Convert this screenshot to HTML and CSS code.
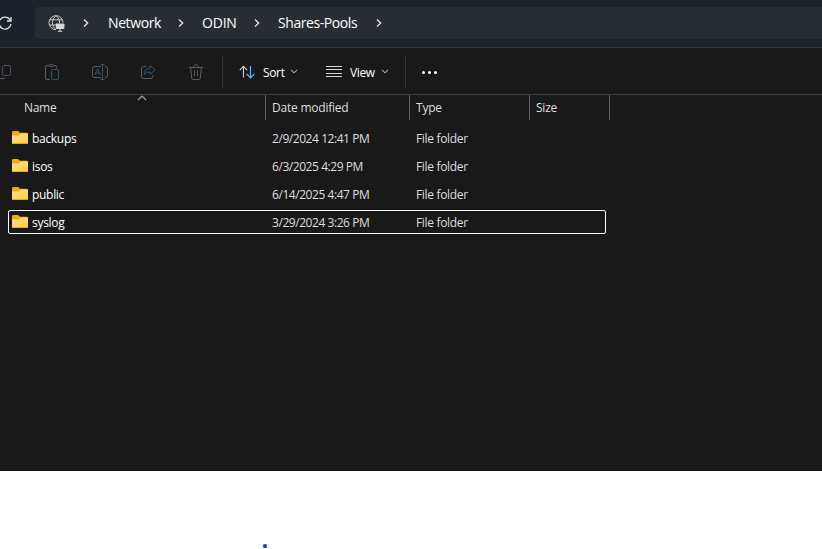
FILE: index.html
```html
<!DOCTYPE html>
<html lang="en">
<head>
<meta charset="utf-8">
<title>Shares-Pools</title>
<link rel="stylesheet" href="styles.css">
</head>
<body>
<svg class="defs" width="0" height="0" aria-hidden="true">
  <defs>
    <linearGradient id="fold" x1="0" y1="0" x2="1" y2="1"><stop offset="0" stop-color="#ffe59b"/><stop offset="1" stop-color="#ffc937"/></linearGradient>
    <symbol id="folder" viewBox="0 0 16 13">
      <path d="M0 1.4Q0 0 1.2 0H5.6Q6.3 0 6.8.6L8 1.7H14.8Q16 1.7 16 2.8V11H0Z" fill="#f5aa0b"/>
      <path d="M0 4.4H6.2Q7 4.4 7.6 3.8L8.8 2.5H15Q16 2.5 16 3.5V11.8Q16 13 14.8 13H1.2Q0 13 0 11.8Z" fill="url(#fold)"/>
      <path d="M.3 12.5H15.7" stroke="#e1a51d" stroke-width=".9"/>
    </symbol>
    <symbol id="chevron" viewBox="0 0 6 8"><path d="M1 .5 4.7 4 1 7.5" fill="none" stroke="#e6e7e8" stroke-width="1.3"/></symbol>
    <symbol id="caret" viewBox="0 0 8 5"><path d="M1 .8 4 3.8 7 .8" fill="none" stroke="#aaa" stroke-width="1.1"/></symbol>
  </defs>
</svg>
<main class="window">
  <header class="address">
    <svg class="refresh" width="16" height="16" viewBox="0 0 16 16" fill="none" stroke="#e2e4e5" stroke-width="1.3"><path d="M13.1 4.8A6 6 0 1 0 14 9M14 2V6H10"/></svg>
    <nav class="crumbs">
      <svg class="globe" width="17" height="17" viewBox="0 0 17 17" fill="none" stroke="#c8cacc">
        <path d="M15 7.5A7 7 0 1 0 8 14.7M8 .7C3.2 4.5 3.2 11 8 14.7M8 .7C10.5 2.8 11.6 5.2 11.6 8M1.8 4.8H14.2M1.2 10H8"/>
        <path d="M8.4 8.4H15.6Q16.4 8.4 16.4 9.2V13.2Q16.4 14 15.6 14H8.4Q7.8 14 7.8 13.2V9.2Q7.8 8.4 8.4 8.4Z" fill="#d4d6d8" stroke="none"/><path d="M12 14V16M10 16.3H14.2" stroke="#d4d6d8"/>
      </svg>
      <svg class="sep sep-1"><use href="#chevron"/></svg>
      <span class="crumb network">Network</span>
      <svg class="sep"><use href="#chevron"/></svg>
      <span class="crumb odin">ODIN</span>
      <svg class="sep"><use href="#chevron"/></svg>
      <span class="crumb shares">Shares-Pools</span>
      <svg class="sep"><use href="#chevron"/></svg>
    </nav>
  </header>
  <div class="toolbar">
    <div class="actions">
      <svg viewBox="0 0 16 16"><path class="gray" d="M3.5 3.5Q2.5 3.5 2.5 5.5V12.5Q2.5 14.5 4.5 14.5H7.5Q9 14.5 9.3 13.5"/><rect class="blue" x="6.5" y="1.5" width="8" height="10" rx="1.5"/></svg>
      <svg viewBox="0 0 16 16"><path class="gray" d="M6 15.5H3Q1.5 15.5 1.5 14V3Q1.5 1.5 3 1.5H4.5M9.5 1.5H11Q12.5 1.5 12.5 3V4"/><rect class="gray" x="4.5" y=".6" width="5" height="2" rx="1"/><rect class="blue" x="7.5" y="5.5" width="7" height="10" rx="1"/></svg>
      <svg viewBox="0 0 16 16"><path class="gray" d="M9 2.5H2.5Q.5 2.5 .5 4.5V11.5Q.5 13.5 2.5 13.5H9M13 2.5Q15.5 2.5 15.5 5V11Q15.5 13.5 13 13.5"/><path class="blue" d="M3 11 5.7 4.5 8.5 11M4 9H7.5M10.5 1V15M8.5 .5H12.5M8.5 15.5H12.5"/></svg>
      <svg viewBox="0 0 16 16"><path class="gray" d="M6 2.5H3.5Q1.5 2.5 1.5 4.5V12.5Q1.5 14.5 3.5 14.5H11Q13 14.5 13 12.5V11"/><path class="blue" d="M10 1.5 15 6 10 10.3V8Q6 7.6 4 10.8 4.2 4.8 10 4Z"/></svg>
      <svg viewBox="0 0 16 16"><path class="gray" d="M1 3.5H15M5.7 3V2.3Q5.7 .8 8 .8T10.3 2.3V3M2.6 3.5 3.7 14Q3.9 15.5 5.2 15.5H10.8Q12.1 15.5 12.3 14L13.4 3.5M6.5 6.5V12M9.5 6.5V12"/></svg>
    </div>
    <div class="sort">
      <svg width="17" height="14" viewBox="0 0 17 14" fill="none"><path d="M4.5 12.5V1.5M.8 5.2 4.5 1.3 8.2 5.2" stroke="#ccc" stroke-width="1.1"/><path d="M11.5 1V12.5M7.6 8.8 11.5 12.8 15.4 8.8" stroke="#4cc2ff" stroke-width="1.2"/></svg>
      <span class="label">Sort</span>
      <svg class="caret"><use href="#caret"/></svg>
    </div>
    <div class="view">
      <svg width="16" height="11" viewBox="0 0 16 11"><path d="M0 .5H16M0 3.5H16M0 7.5H16M0 10.5H16" stroke="#d4d4d4"/></svg>
      <span class="label">View</span>
      <svg class="caret"><use href="#caret"/></svg>
    </div>
    <div class="more"><i></i><i></i><i></i></div>
  </div>
  <section class="files">
    <div class="row head">
      <span class="name">Name<svg class="sorted" width="10" height="6" viewBox="0 0 10 6"><path d="M1 5 5 1 9 5" fill="none" stroke="#aaa" stroke-width="1.1"/></svg></span><span>Date modified</span><span>Type</span><span>Size</span>
    </div>
    <div class="row"><span class="name"><svg class="folder"><use href="#folder"/></svg>backups</span><span class="date">2/9/2024 12:41 PM</span><span>File folder</span></div>
    <div class="row"><span class="name"><svg class="folder"><use href="#folder"/></svg>isos</span><span class="date">6/3/2025 4:29 PM</span><span>File folder</span></div>
    <div class="row"><span class="name"><svg class="folder"><use href="#folder"/></svg>public</span><span class="date">6/14/2025 4:47 PM</span><span>File folder</span></div>
    <div class="row selected"><span class="name"><svg class="folder"><use href="#folder"/></svg>syslog</span><span class="date">3/29/2024 3:26 PM</span><span>File folder</span></div>
  </section>
</main>
<footer class="below"><i class="dot"></i></footer>
</body>
</html>
```

FILE: styles.css
```css
* { box-sizing: border-box; }
body { margin: 0; height: 549px; overflow: hidden; background: #fff; font: 12px/16px "Open Sans", sans-serif; color: #fff; white-space: nowrap; }
svg { display: block; flex: none; }
.defs { position: absolute; }
.window { height: 471px; background: #191919; overflow: hidden; }
.address { height: 48px; display: flex; align-items: flex-start; background: #1b2229; border-bottom: 1px solid #373737; }
.refresh { margin: 15px 22px 0 -3px; }
.crumbs { flex: 1; height: 32px; margin-top: 7px; padding-left: 13px; display: flex; align-items: center; background: #282d33; border-radius: 4px 0 0 4px; font-size: 14px; }
.crumb { margin: 0 17px 0 19px; flex: none; }
.network { width: 53px; letter-spacing: -.4px; }
.odin { width: 35px; margin-left: 18px; letter-spacing: -.2px; }
.shares { width: 81px; margin-left: 18px; letter-spacing: -.42px; }
.sep { width: 6px; height: 8px; }
.sep-1 { margin-left: 18px; }
.toolbar { height: 47px; padding-top: 1px; display: flex; align-items: center; border-bottom: 1px solid #3e3e3e; }
.actions { width: 227px; height: 32px; margin-left: -4px; display: flex; align-items: center; gap: 32px; border-right: 1px solid #333; }
.actions svg { width: 16px; height: 16px; }
.gray { fill: none; stroke: #5d5d5d; }
.blue { fill: none; stroke: #2d5870; }
.sort { width: 103px; padding-left: 16px; display: flex; align-items: center; }
.view { width: 80px; height: 32px; display: flex; align-items: center; border-right: 1px solid #333; }
.label { width: 23px; margin: 2px 4px 0 7px; letter-spacing: -.35px; }
.view .label { width: 26px; margin: 2px 5px 0 8px; }
.caret { width: 8px; height: 5px; }
.more { display: flex; gap: 3px; padding: 1px 0 0 16px; }
.more i { width: 3px; height: 3px; border-radius: 50%; background: #fff; }
.row { width: 598px; height: 24px; margin: 0 0 4px 8px; display: grid; grid-template-columns: 257px 144px 120px 75px; align-items: center; border: 1px solid transparent; border-radius: 2px; color: #dedede; letter-spacing: -.33px; }
.row > span { padding: 1px 0 0 6px; }
.row > .name { padding-left: 3px; display: flex; align-items: center; gap: 4px; color: #fff; letter-spacing: -.3px; }
.row > .date { letter-spacing: -.44px; }
.folder { width: 16px; height: 13px; margin-top: -3px; }
.selected { border-color: #fff; }
.head { width: 610px; height: 25px; margin: 0 0 6px; grid-template-columns: 266px 144px 120px 80px; border: 0; letter-spacing: -.22px; }
.head > span { height: 25px; padding-top: 0; line-height: 25px; border-right: 1px solid #636363; }
.head > .name { display: block; position: relative; padding-left: 24px; color: #dedede; }
.sorted { position: absolute; left: 137px; top: 0; }
.below { height: 78px; padding: 73px 0 0 263px; }
.dot { display: block; width: 4px; height: 4px; border-radius: 1.5px; background: #0050ef; }
```
